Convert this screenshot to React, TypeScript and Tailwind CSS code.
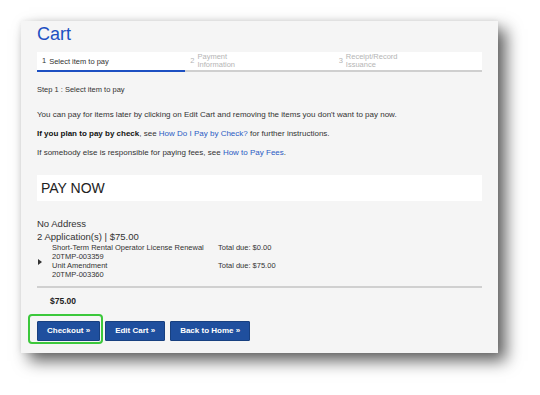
import React from 'react';

const steps = [
  { n: '1', label: ['Select item to pay'], active: true },
  { n: '2', label: ['Payment', 'Information'], active: false },
  { n: '3', label: ['Receipt/Record', 'Issuance'], active: false },
];

const items = [
  { title: 'Short-Term Rental Operator License Renewal', id: '20TMP-003359', due: '$0.00' },
  { title: 'Unit Amendment', id: '20TMP-003360', due: '$75.00' },
];

export default function App() {
  return (
    <div className="w-[540px] h-[395px] bg-white overflow-hidden pt-[21px] pl-[21px] font-['Liberation_Sans',Arial,sans-serif]">
      <div className="w-[477px] h-[332px] bg-[#f5f5f5] px-4 pt-[3px] shadow-[8px_8px_15px_rgba(0,0,0,0.62),0_0_6px_rgba(0,0,0,0.08)] text-[#333]">
        <h1 className="text-[18px] leading-[21px] text-[#1d50c2]">Cart</h1>

        {/* step tracker */}
        <div className="mt-[7px] grid grid-cols-3 bg-white h-[20px]">
          {steps.map((s) => (
            <div
              key={s.n}
              className={`flex items-center gap-[3px] pl-[5px] border-b-2 ${s.active ? 'border-[#1d50c2] text-[#333]' : 'border-[#cfcfcf] text-[#b5b5b5]'}`}
            >
              <span className={s.active ? 'text-[7.5px]' : 'text-[7.5px]'}>{s.n}</span>
              <span className={s.active ? 'text-[7.5px] leading-[9px]' : 'text-[7.5px] leading-[8px]'}>
                {s.label.map((l) => (
                  <span key={l} className="block">{l}</span>
                ))}
              </span>
            </div>
          ))}
        </div>

        <p className="mt-[13px] text-[7.5px] leading-[10px]">Step 1 : Select item to pay</p>

        <div className="mt-[15px] flex flex-col gap-[9px] text-[8px] leading-[10px]">
          <p>You can pay for items later by clicking on Edit Cart and removing the items you don't want to pay now.</p>
          <p>
            <b className="text-[#111]">If you plan to pay by check</b>, see <span className="text-[#2a5bc4]">How Do I Pay by Check?</span> for further instructions.
          </p>
          <p>
            If somebody else is responsible for paying fees, see <span className="text-[#2a5bc4]">How to Pay Fees</span>.
          </p>
        </div>

        <div className="mt-[17px] bg-white h-[26px] flex items-center pl-1 text-[14px] text-[#222]">PAY NOW</div>

        <div className="mt-[16px] text-[9.5px] leading-[13px] text-[#333]">
          <div>No Address</div>
          <div>2 Application(s) | $75.00</div>
        </div>

        <div className="flex text-[7.5px] leading-[9px] relative">
          <span className="absolute left-[1px] top-[16px] w-0 h-0 border-y-[3px] border-y-transparent border-l-[4px] border-l-[#333]" />
          <div className="pl-[15px] w-[181px]">
            {items.map((it) => (
              <div key={it.id}>
                <div>{it.title}</div>
                <div>{it.id}</div>
              </div>
            ))}
          </div>
          <div>
            {items.map((it) => (
              <div key={it.id} className="h-[18px]">Total due: {it.due}</div>
            ))}
          </div>
        </div>

        <div className="mt-[7px] border-t-2 border-[#d0d0d0]" />

        <div className="mt-[8px] pl-[13px] text-[8.5px] leading-[10px] font-bold text-[#222]">$75.00</div>

        <div className="mt-[10px] flex gap-[5px]">
          {['Checkout »', 'Edit Cart »', 'Back to Home »'].map((b, i) => (
            <div key={b} className="relative">
              <button className="h-[20px] px-[9px] bg-[#1f4f9e] text-white text-[8px] font-bold rounded-[1px] border border-[#184080]">
                {b}
              </button>
              {i === 0 && (
                <span className="absolute -left-[9px] -top-[2px] -right-[3px] -bottom-[3px] border-2 border-[#3cc83c] rounded-[4px]" />
              )}
            </div>
          ))}
        </div>
      </div>
    </div>
  );
}
